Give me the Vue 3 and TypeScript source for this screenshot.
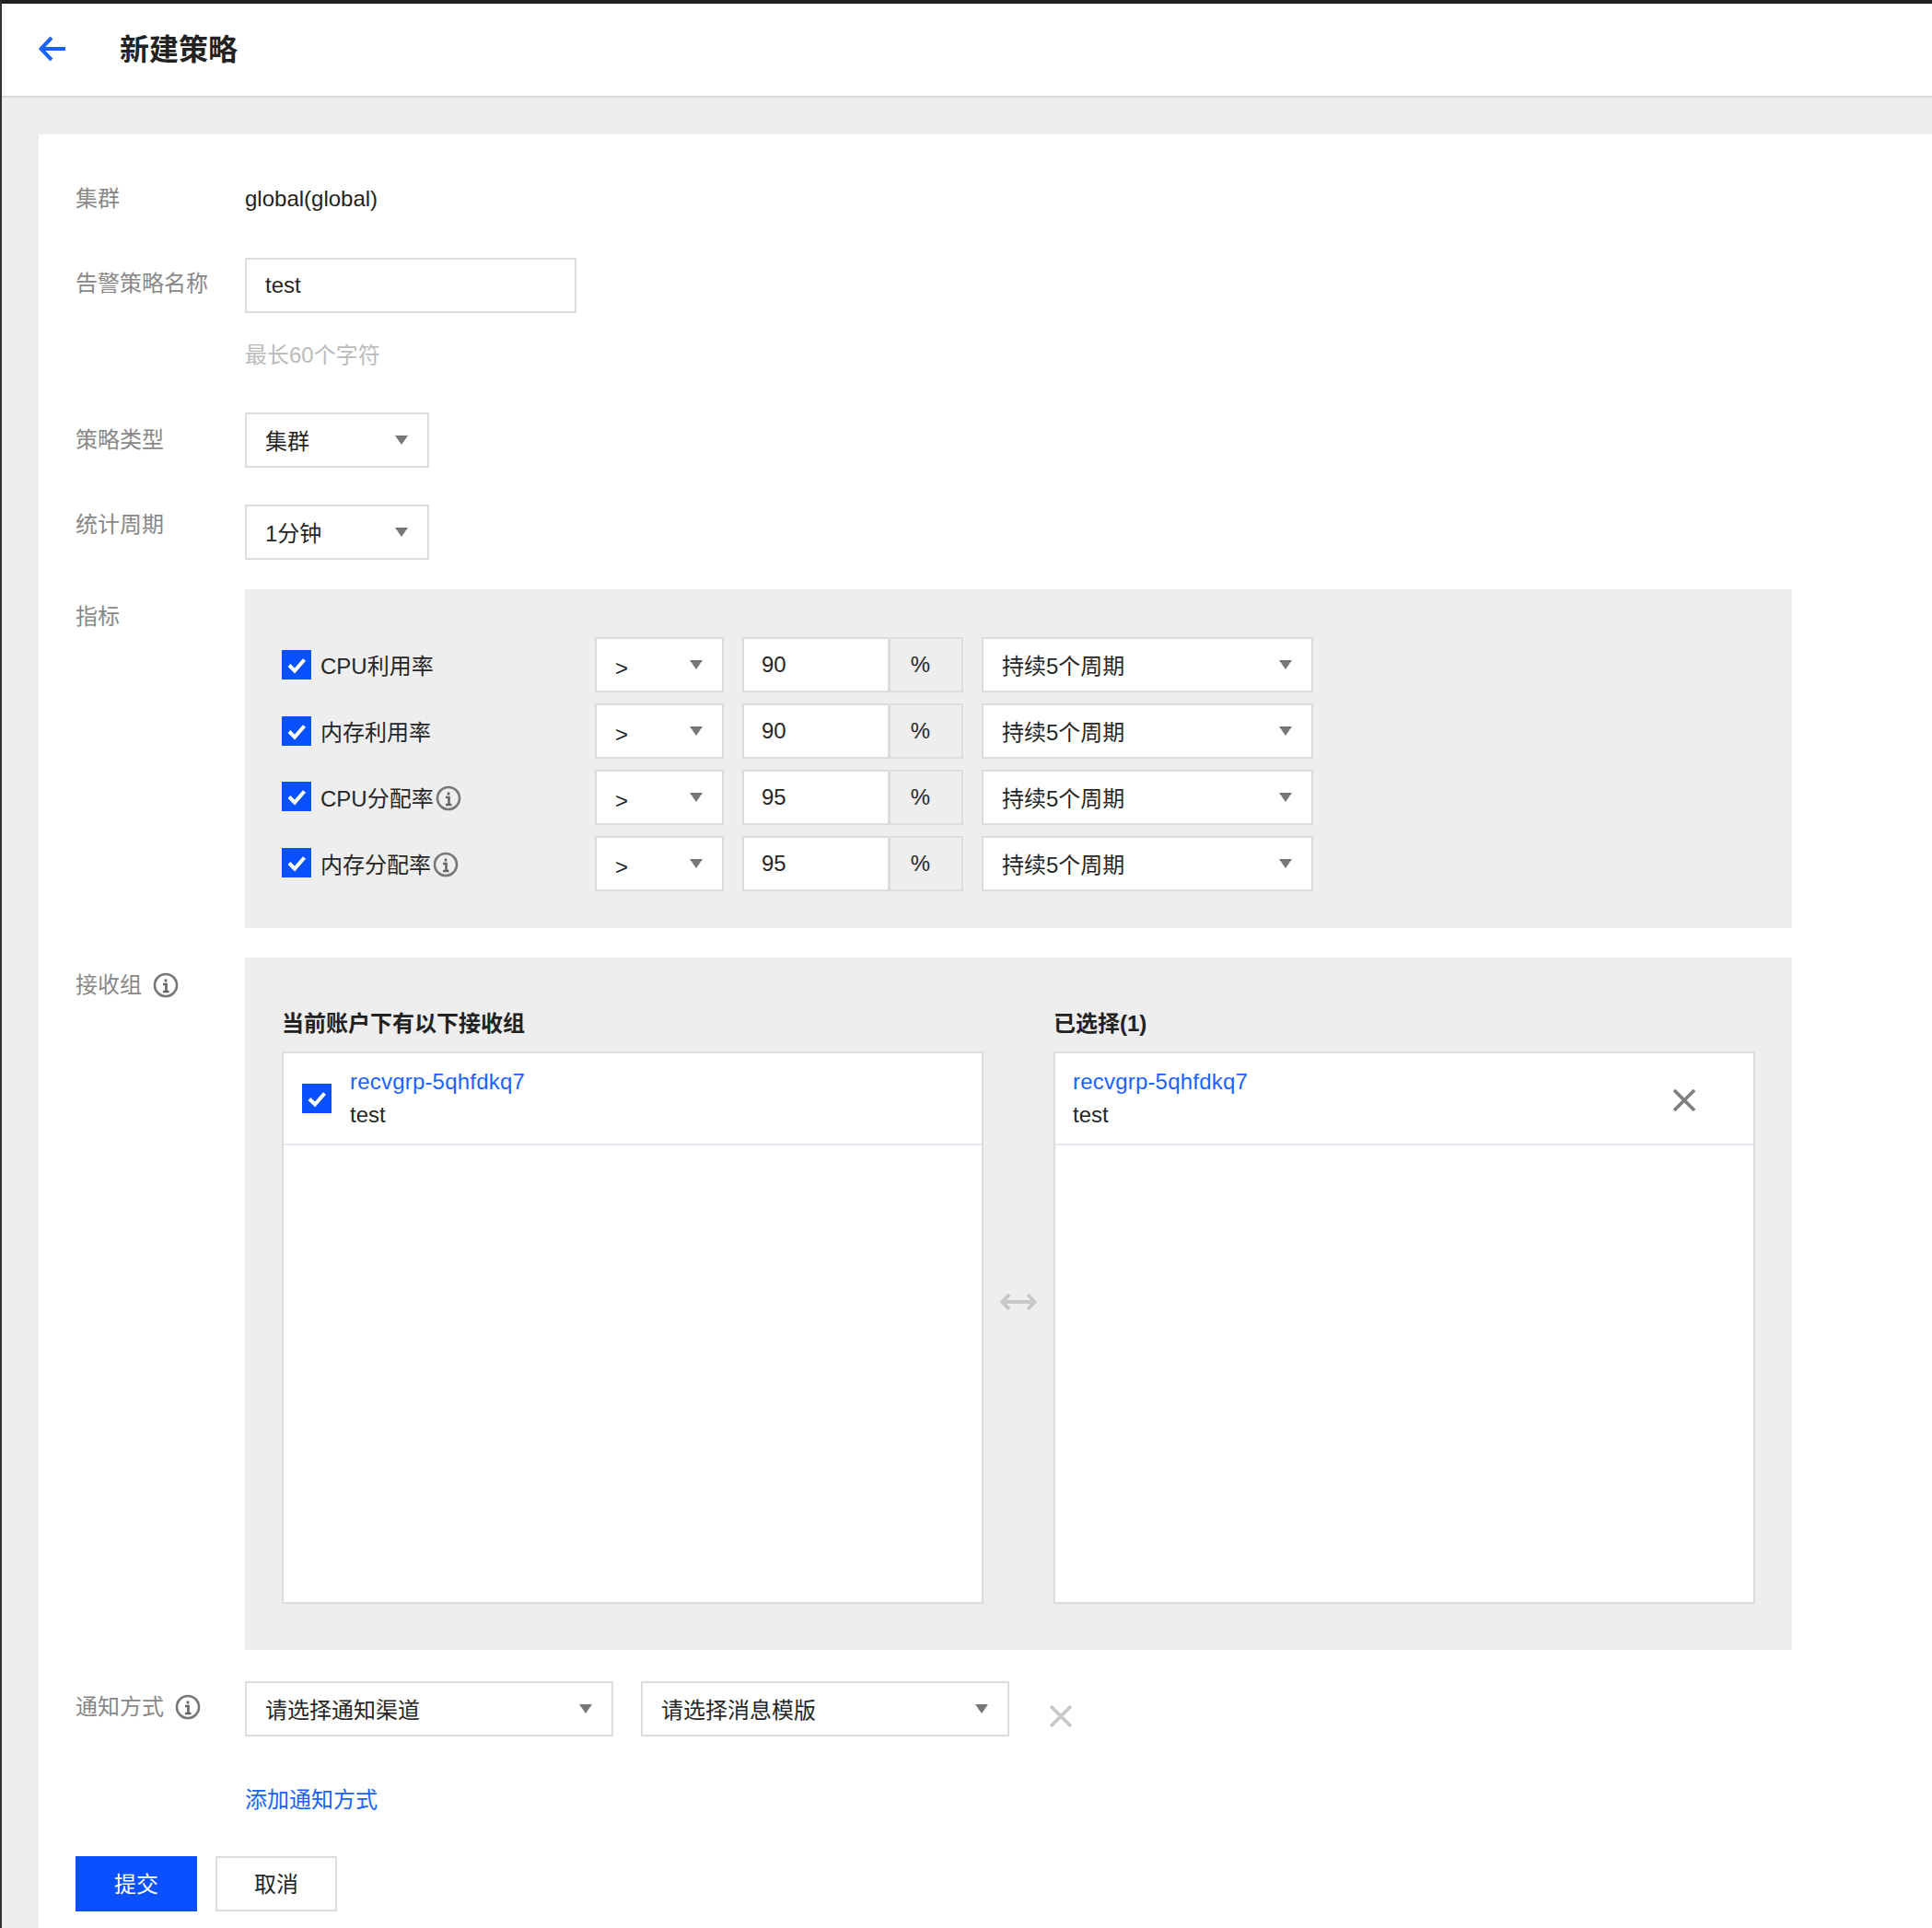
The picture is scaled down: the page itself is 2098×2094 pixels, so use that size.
<template>
  <div class="page">
    <header class="top-bar">
      <svg class="back" width="30" height="28" viewBox="0 0 30 28">
        <path d="M14 2 2.500 14 14 26M3 14h26" fill="none" stroke="#1a62ff" stroke-width="4" />
      </svg>
      <h1>新建策略</h1>
    </header>

    <main class="card">
      <div class="form-row first">
        <div class="form-label">集群</div>
        <div class="plain-value">global(global)</div>
      </div>

      <div class="form-row name-row">
        <div class="form-label tight">告警策略名称</div>
        <div>
          <div class="field name-input">test</div>
          <div class="help">最长60个字符</div>
        </div>
      </div>

      <div class="form-row type-row">
        <div class="form-label">策略类型</div>
        <div class="field select small-select">集群<i class="caret"></i></div>
      </div>

      <div class="form-row period-row">
        <div class="form-label high">统计周期</div>
        <div class="field select small-select">1分钟<i class="caret"></i></div>
      </div>

      <div class="form-row panel-row">
        <div class="form-label">指标</div>
        <div class="panel metrics">
          <div v-for="m in metrics" :key="m.name" class="metric">
            <div class="metric-name" :class="{ 'has-tip': m.tip }">
              <span class="check">
                <svg width="32" height="32" viewBox="0 0 32 32"><path d="M8 16.500l6 6L24.500 10.500" fill="none" stroke="#fff" stroke-width="4" /></svg>
              </span>
              <span class="metric-text">{{ m.name }}</span>
              <svg v-if="m.tip" class="info tip-icon" width="28" height="28" viewBox="0 0 28 28">
                <circle cx="14" cy="14" r="12" fill="none" stroke="#777" stroke-width="2.600" />
                <path d="M14 7.500v3M11 13h3.500v8M11 21h6.500" fill="none" stroke="#666" stroke-width="2.600" />
              </svg>
            </div>
            <div class="field select op-select"><span class="op">&gt;</span><i class="caret"></i></div>
            <div class="field number">{{ m.value }}</div>
            <div class="field addon">%</div>
            <div class="field select duration">持续5个周期<i class="caret"></i></div>
          </div>
        </div>
      </div>

      <div class="form-row panel-row">
        <div class="form-label with-icon">
          接收组
          <svg class="info" width="28" height="28" viewBox="0 0 28 28">
            <circle cx="14" cy="14" r="12" fill="none" stroke="#777" stroke-width="2.600" />
            <path d="M14 7.500v3M11 13h3.500v8M11 21h6.500" fill="none" stroke="#666" stroke-width="2.600" />
          </svg>
        </div>
        <div class="panel groups">
          <div class="group-col">
            <div class="group-title">当前账户下有以下接收组</div>
            <div class="group-box">
              <div class="group-item">
                <span class="check">
                  <svg width="32" height="32" viewBox="0 0 32 32"><path d="M8 16.500l6 6L24.500 10.500" fill="none" stroke="#fff" stroke-width="4" /></svg>
                </span>
                <div class="group-text">
                  <a class="link">recvgrp-5qhfdkq7</a>
                  <div>test</div>
                </div>
              </div>
            </div>
          </div>

          <svg class="swap" width="40" height="20" viewBox="0 0 40 20">
            <path d="M10 2 2.500 10l7.500 8M30 2l7.500 8-7.500 8M3 10h34" fill="none" stroke="#c8c8c8" stroke-width="4" />
          </svg>

          <div class="group-col">
            <div class="group-title">已选择(1)</div>
            <div class="group-box">
              <div class="group-item selected">
                <div class="group-text">
                  <a class="link">recvgrp-5qhfdkq7</a>
                  <div>test</div>
                </div>
                <svg class="remove" width="26" height="26" viewBox="0 0 26 26">
                  <path d="M2 2l22 22M24 2 2 24" fill="none" stroke="#808080" stroke-width="3.800" />
                </svg>
              </div>
            </div>
          </div>
        </div>
      </div>

      <div class="form-row notify-row">
        <div class="form-label with-icon tight">
          通知方式
          <svg class="info" width="28" height="28" viewBox="0 0 28 28">
            <circle cx="14" cy="14" r="12" fill="none" stroke="#777" stroke-width="2.600" />
            <path d="M14 7.500v3M11 13h3.500v8M11 21h6.500" fill="none" stroke="#666" stroke-width="2.600" />
          </svg>
        </div>
        <div class="field select">请选择通知渠道<i class="caret"></i></div>
        <div class="field select second">请选择消息模版<i class="caret"></i></div>
        <svg class="notify-remove" width="26" height="26" viewBox="0 0 26 26">
          <path d="M2 2l22 22M24 2 2 24" fill="none" stroke="#c8c8c8" stroke-width="3.800" />
        </svg>
      </div>

      <a class="link add-link">添加通知方式</a>

      <div class="actions">
        <button class="btn primary">提交</button>
        <button class="btn">取消</button>
      </div>
    </main>
  </div>
</template>

<script setup lang="ts">
interface Metric {
  name: string;
  value: number;
  tip: boolean;
}

const metrics: Metric[] = [
  { name: 'CPU利用率', value: 90, tip: false },
  { name: '内存利用率', value: 90, tip: false },
  { name: 'CPU分配率', value: 95, tip: true },
  { name: '内存分配率', value: 95, tip: true },
];
</script>

<style>
html,
body {
  margin: 0;
  background: #fff;
}
</style>

<style scoped>
* {
  box-sizing: border-box;
}

.page {
  display: flex;
  flex-direction: column;
  height: 2094px;
  overflow: hidden;
  border-top: 4px solid #1f2024;
  border-left: 2px solid #333;
  background: #eee;
  color: #262626;
  font-family: "Liberation Sans", "Noto Sans CJK SC", sans-serif;
  font-size: 24px;
  line-height: 36px;
}

.top-bar {
  display: flex;
  align-items: center;
  flex: none;
  height: 102px;
  padding-left: 40px;
  border-bottom: 2px solid #d9d9d9;
  background: #fff;
}

.back {
  margin: 0 58px 2px 0;
}

h1 {
  margin: 0;
  color: #222;
  font-size: 32px;
  font-weight: 700;
}

.card {
  flex: 1;
  margin: 40px 0 0 40px;
  padding: 52px 0 0 40px;
  background: #fff;
}

.form-row {
  display: flex;
}

.form-label {
  flex: none;
  width: 184px;
  padding-top: 12px;
  color: #888;
}

.form-label.tight {
  padding-top: 10px;
}

.form-label.high {
  padding-top: 4px;
}

.first .form-label {
  padding-top: 0;
}

.with-icon {
  display: flex;
  align-items: flex-start;
}

.with-icon .info {
  margin: 4px 0 0 12px;
}

.plain-value {
  color: #222;
}

.name-row {
  margin-top: 46px;
}

.type-row {
  margin-top: 45px;
}

.period-row {
  margin-top: 40px;
}

.panel-row {
  margin-top: 32px;
}

.panel-row + .panel-row {
  margin-top: 32px;
}

.notify-row {
  margin-top: 34px;
}

.field {
  display: flex;
  align-items: center;
  height: 60px;
  border: 2px solid #dcdcdc;
  background: #fff;
}

.name-input {
  width: 360px;
  padding-left: 20px;
}

.help {
  margin-top: 28px;
  margin-bottom: -1px;
  color: #bbb;
}

.select {
  justify-content: space-between;
  width: 400px;
  padding: 3px 21px 0 20px;
}

.caret {
  width: 0;
  height: 0;
  margin-top: -3px;
  border-top: 10px solid #777;
  border-left: 7.500px solid transparent;
  border-right: 7.500px solid transparent;
}

.small-select {
  width: 200px;
}

.panel {
  width: 1680px;
  background: #eee;
}

.metrics {
  display: flex;
  flex-direction: column;
  gap: 12px;
  padding: 52px 40px 40px;
}

.metric {
  display: flex;
  align-items: center;
}

.metric-name {
  display: flex;
  align-items: center;
  width: 340px;
}

.check {
  display: block;
  flex: none;
  width: 32px;
  height: 32px;
  background: #0a50ff;
}

.check svg {
  display: block;
}

.metric-text {
  margin-left: 10px;
  padding-top: 3px;
}

.has-tip .check {
  margin-bottom: 3px;
}

.tip-icon {
  margin: 2px 0 0 2px;
}

.op-select {
  width: 140px;
  margin-right: 20px;
}

.op {
  padding-top: 4px;
}

.number {
  width: 160px;
  padding-left: 19px;
}

.addon {
  justify-content: center;
  width: 81px;
  margin-left: -1px;
  padding-right: 12px;
  padding-bottom: 1px;
  background: #eee;
}

.duration {
  width: 360px;
  margin-left: 20px;
}

.groups {
  display: flex;
  padding: 54px 40px 50px;
}

.group-col {
  flex: none;
  width: 762px;
}

.group-title {
  margin-bottom: 12px;
  color: #222;
  font-weight: 700;
}

.group-box {
  height: 600px;
  border: 2px solid #dcdcdc;
  background: #fff;
}

.group-item {
  display: flex;
  align-items: center;
  height: 100px;
  border-bottom: 2px solid #e4e8f0;
  padding-left: 20px;
}

.group-text {
  margin-left: 20px;
}

.selected {
  justify-content: space-between;
  padding-right: 62px;
  padding-left: 19px;
}

.selected .group-text {
  margin-left: 0;
}

.remove {
  margin-top: 4px;
}

.link {
  color: #1a62ff;
  letter-spacing: 0.2px;
}

.swap {
  align-self: center;
  flex: none;
  margin: 0 18px 8px;
}

.second {
  margin-left: 30px;
}

.notify-remove {
  margin: 25px 0 0 43px;
}

.add-link {
  display: block;
  margin: 51px 0 0 184px;
  letter-spacing: 0;
}

.actions {
  display: flex;
  gap: 20px;
  margin-top: 43px;
}

.btn {
  width: 132px;
  height: 60px;
  padding: 2px 0 0;
  border: 2px solid #dcdcdc;
  border-radius: 0;
  background: #fff;
  color: #262626;
  font: inherit;
}

.primary {
  border-color: #0a50ff;
  background: #0a50ff;
  color: #fff;
}
</style>
